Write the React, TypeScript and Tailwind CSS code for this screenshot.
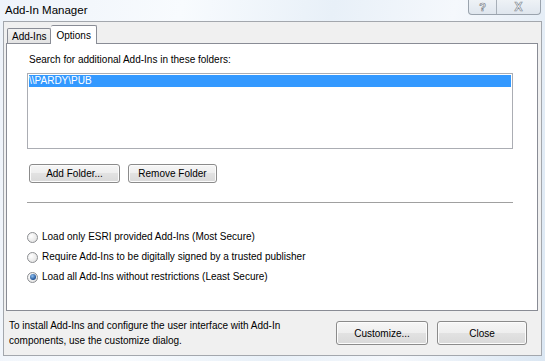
import React from "react";

function Btn({ label, w, h }: { label: string; w: string; h: string }) {
  return (
    <div
      className={`${w} ${h} flex items-center justify-center border border-[#8b8b8b] rounded-[3px] bg-[linear-gradient(#f6f6f6_0%,#eeeeee_50%,#e2e2e2_50%,#d9d9d9_100%)] text-[10px] text-black shadow-[inset_0_0_0_1px_#fcfcfc]`}
    >
      {label}
    </div>
  );
}

function Radio({ label, checked }: { label: string; checked?: boolean }) {
  return (
    <div className="flex items-center h-[20px]">
      <div className="w-[11px] h-[11px] rounded-full border border-[#8d8f92] bg-[radial-gradient(circle_at_35%_35%,#ffffff,#dcdcdc)] flex items-center justify-center ml-[20px]">
        {checked && (
          <div className="w-[6px] h-[6px] rounded-full bg-[radial-gradient(circle_at_40%_35%,#8fc1f2,#1c4f93_70%)]" />
        )}
      </div>
      <span className="ml-[4px] text-[10px] leading-none text-black">{label}</span>
    </div>
  );
}

export default function App() {
  return (
    <div
      className="relative w-[545px] h-[361px] overflow-hidden bg-[linear-gradient(100deg,#eef3fa_0%,#f8fbfe_30%,#e8f0f8_55%,#f5f8fc_75%,#dbe7f3_100%)] font-['Liberation_Sans',Arial,sans-serif]"
    >
      {/* title bar */}
      <div className="h-[21px] flex items-center pl-[5px] text-[11.5px] text-black">Add-In Manager</div>

      {/* caption buttons */}
      <div className="absolute top-0 right-[4px] flex h-[15px] border border-t-0 border-[#9aa3ad] rounded-b-[4px] bg-[linear-gradient(#eef2f6,#dfe6ee)] overflow-hidden">
        <div className="w-[28px] h-full flex items-center justify-center border-r border-[#a7afb8]">
          <span className="text-[11px] leading-none font-bold text-white [-webkit-text-stroke:0.7px_#7f8790]">?</span>
        </div>
        <div className="w-[43px] h-full flex items-center justify-center">
          <span className="text-[12px] leading-none font-bold text-white [-webkit-text-stroke:0.7px_#8a929b]">X</span>
        </div>
      </div>

      {/* client */}
      <div className="ml-[3px] mr-[3px] h-[335px] bg-[#f0f0f0] border border-[#a3a7ad] flex flex-col">
        <div className="pl-[2px] pr-[3px] pt-[2px]">
          {/* tabs */}
          <div className="flex items-end h-[19px] pl-[1px]">
            <div className="h-[15px] px-[4px] flex items-center border border-b-0 border-[#898c95] bg-[linear-gradient(#f2f2f2,#e3e3e3)] text-[10px] text-black rounded-t-[2px]">
              Add-Ins
            </div>
            <div className="h-[19px] px-[5px] flex items-start pt-[2px] border border-b-0 border-l-0 border-[#898c95] bg-white text-[10px] text-black rounded-t-[2px] relative top-[1px] z-10">
              Options
            </div>
          </div>
          {/* tab page */}
          <div className="h-[268px] bg-white border border-[#898c95] flex flex-col pl-[20px]">
            <div className="mt-[9px] text-[10px] leading-[13px] text-black pl-[2px]">
              Search for additional Add-Ins in these folders:
            </div>
            <div className="mt-[7px] w-[486px] h-[76px] border border-[#abadb3] bg-white p-[1px]">
              <div className="h-[12px] bg-[#3399ff] text-white text-[10px] leading-[12px]">\\PARDY\PUB</div>
            </div>
            <div className="mt-[15px] flex gap-[8px] pl-[2px]">
              <Btn label="Add Folder..." w="w-[91px]" h="h-[19px]" />
              <Btn label="Remove Folder" w="w-[89px]" h="h-[19px]" />
            </div>
            <div className="mt-[19px] w-[486px] h-[2px] border-t border-[#a0a0a0] border-b border-b-white" />
            <div className="mt-[23px] flex flex-col -ml-[20px]">
              <Radio label="Load only ESRI provided Add-Ins (Most Secure)" />
              <Radio label="Require Add-Ins to be digitally signed by a trusted publisher" />
              <Radio label="Load all Add-Ins without restrictions (Least Secure)" checked />
            </div>
          </div>
        </div>
        {/* footer */}
        <div className="flex items-center h-[44px] pl-[5px]">
          <div className="w-[320px] text-[10px] leading-[15px] text-black">
            To install Add-Ins and configure the user interface with Add-In<br />components, use the customize dialog.
          </div>
          <div className="ml-[7px]">
            <Btn label="Customize..." w="w-[92px]" h="h-[24px]" />
          </div>
          <div className="ml-[9px]">
            <Btn label="Close" w="w-[90px]" h="h-[24px]" />
          </div>
        </div>
      </div>
    </div>
  );
}
